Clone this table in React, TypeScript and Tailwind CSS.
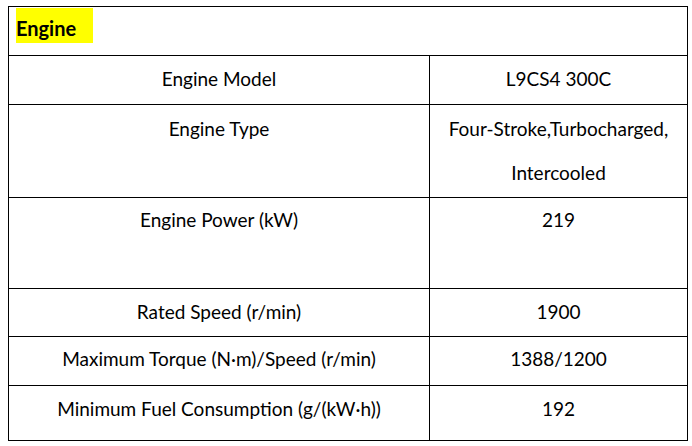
const rows: { label: string; value: string[]; h: string; pt: string }[] = [
  { label: "Engine Model", value: ["L9CS4 300C"], h: "h-[49px]", pt: "pt-px" },
  {
    label: "Engine Type",
    value: ["Four-Stroke,Turbocharged,", "Intercooled"],
    h: "h-[93px]",
    pt: "pt-[2px]",
  },
  { label: "Engine Power (kW)", value: ["219"], h: "h-[91px]", pt: "pt-0" },
  { label: "Rated Speed (r/min)", value: ["1900"], h: "h-[48px]", pt: "pt-px" },
  {
    label: "Maximum Torque (N·m)/Speed (r/min)",
    value: ["1388/1200"],
    h: "h-[49px]",
    pt: "pt-0",
  },
  {
    label: "Minimum Fuel Consumption (g/(kW·h))",
    value: ["192"],
    h: "h-[55px]",
    pt: "pt-px",
  },
];

export default function App() {
  return (
    <div
      className="h-[446px] w-[692px] bg-white pl-[8px] pt-[6px] text-[19px] text-black"
      style={{ fontFamily: "Lato, 'Liberation Sans', sans-serif" }}
    >
      <div className="w-[680px] border border-black">
        {/* Title */}
        <div className="h-[48px]">
          <span className="ml-[7px] mt-px inline-flex h-[35px] w-[77px] items-end bg-[#ffff00] pb-[5px] text-[20px] font-bold leading-none">
            Engine
          </span>
        </div>

        {/* Specs */}
        {rows.map((row) => (
          <div key={row.label} className={`grid grid-cols-[420px_1fr] border-t border-black ${row.h}`}>
            <div className={`text-center leading-[44px] ${row.pt}`}>{row.label}</div>
            <div className={`border-l border-black text-center leading-[44px] ${row.pt}`}>
              {row.value.map((line) => (
                <div key={line}>{line}</div>
              ))}
            </div>
          </div>
        ))}
      </div>
    </div>
  );
}
